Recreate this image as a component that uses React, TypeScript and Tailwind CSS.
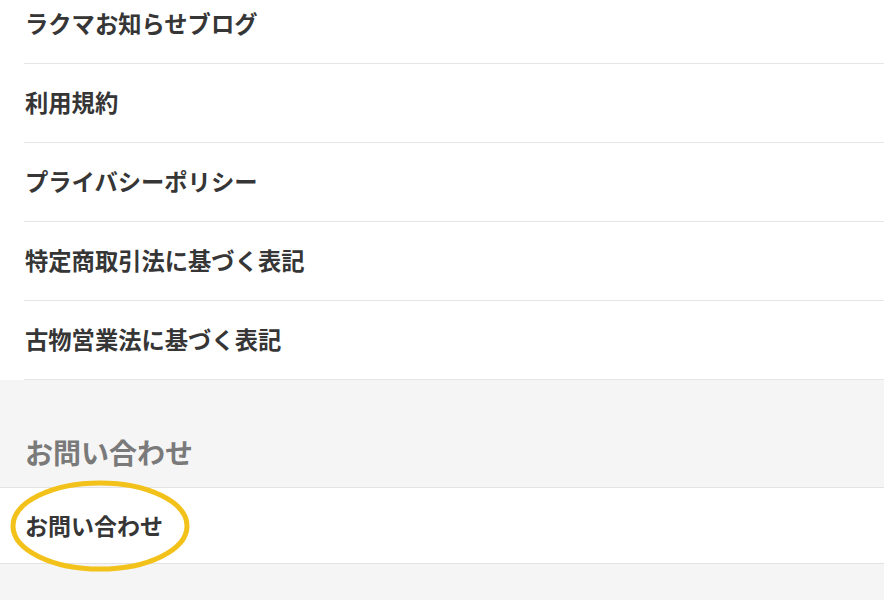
import React from "react";

const links = [
  "ラクマお知らせブログ",
  "利用規約",
  "プライバシーポリシー",
  "特定商取引法に基づく表記",
  "古物営業法に基づく表記",
];

const font = {
  fontFamily: '"Noto Sans CJK JP", "Noto Sans", sans-serif',
};

export default function App() {
  return (
    <div className="w-[884px] h-[600px] overflow-hidden bg-[#f5f5f5]" style={font}>
      <div className="bg-white -mt-[15px]">
        {links.map((label) => (
          <div key={label} className="pl-[24px]">
            <div className="h-[79px] flex items-center border-b border-[#e6e6e6] pl-[1px]">
              <span className="text-[23.3px] font-bold text-[#363636] leading-none">
                {label}
              </span>
            </div>
          </div>
        ))}
      </div>

      <div className="h-[108px] flex items-end pb-[21px] pl-[25px] border-b border-[#e3e3e3]">
        <span className="text-[28px] font-bold text-[#7a7a7a] leading-none">お問い合わせ</span>
      </div>

      <div className="relative bg-white h-[76px] flex items-center pl-[25px] border-b border-[#e3e3e3]">
        <span className="text-[23px] font-bold text-[#363636] leading-none">お問い合わせ</span>
        <svg
          className="absolute left-[8px] top-[-8px] pointer-events-none"
          width="186"
          height="96"
          viewBox="0 0 186 96"
        >
          <ellipse cx="92" cy="46" rx="87" ry="43" fill="none" stroke="#f2c21b" strokeWidth="5" />
        </svg>
      </div>
    </div>
  );
}
